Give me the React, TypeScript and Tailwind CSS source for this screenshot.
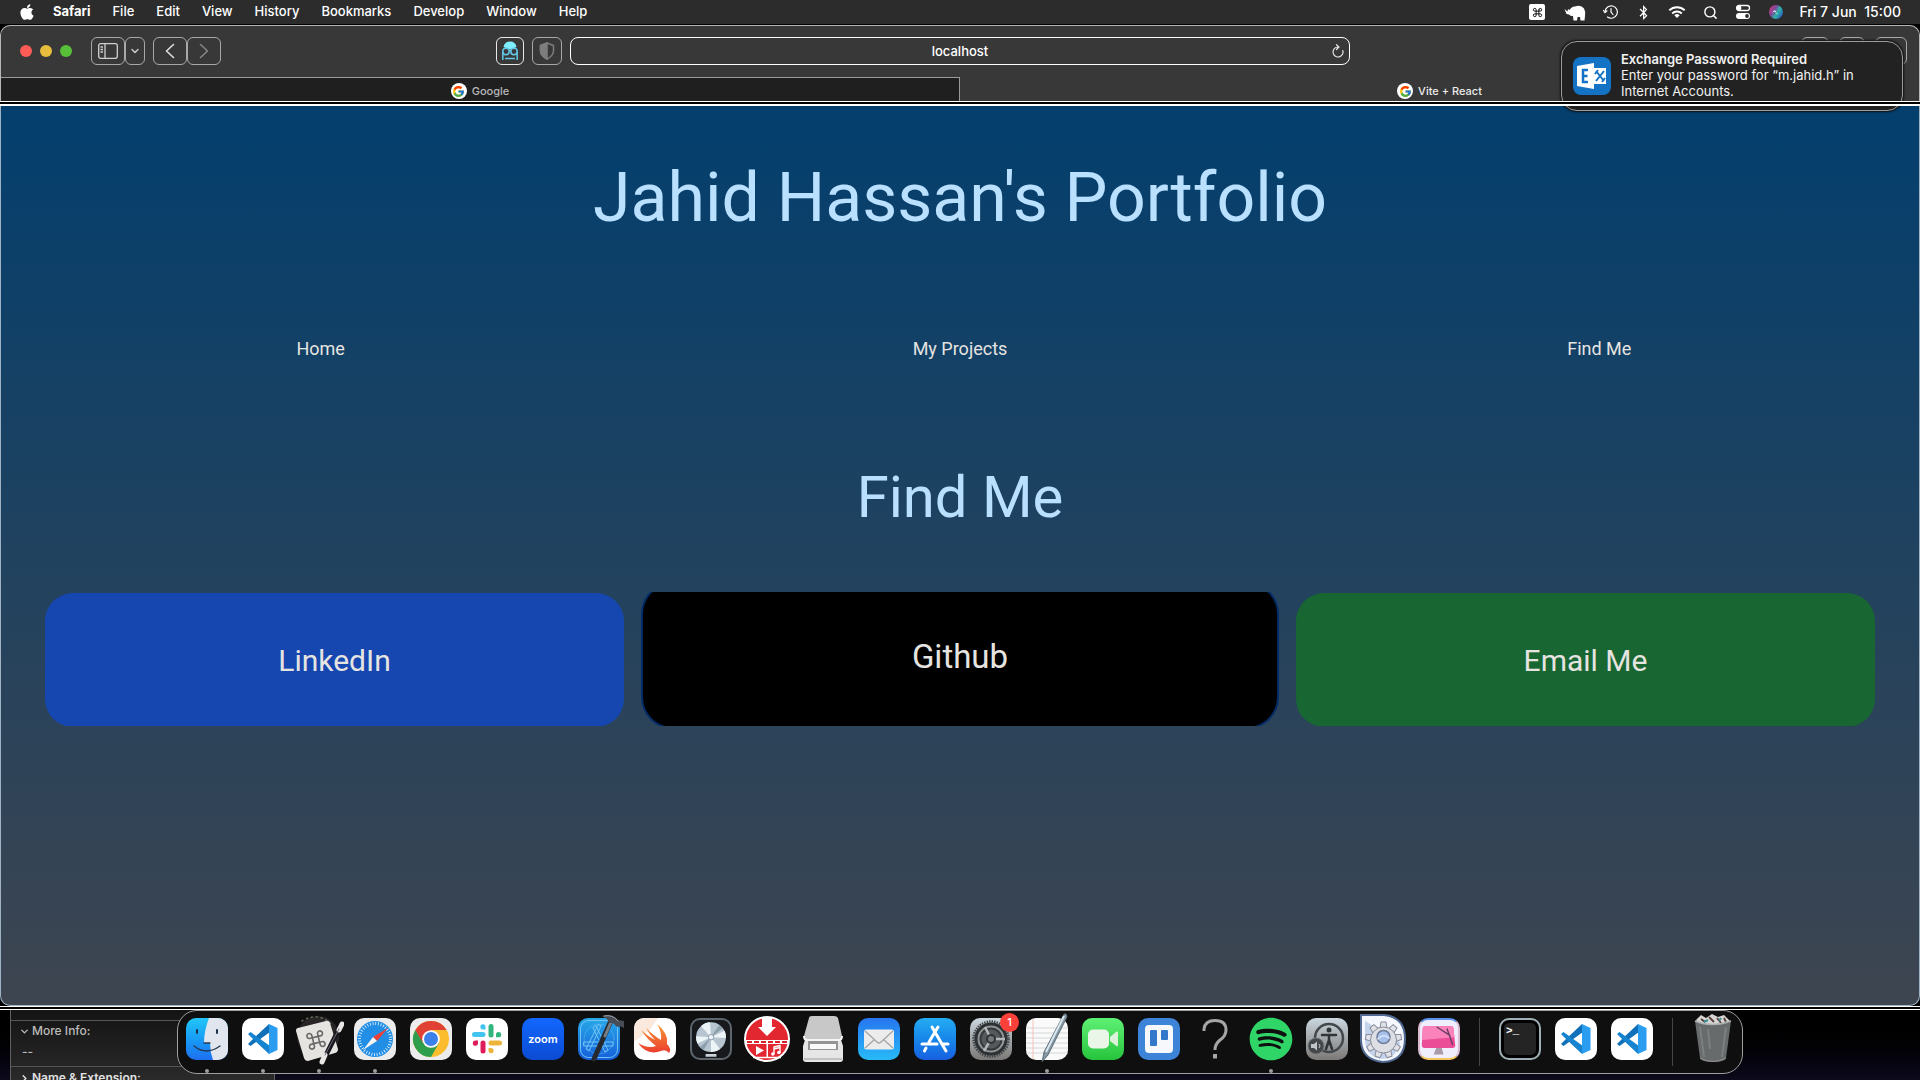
import type { ReactNode } from "react";
import { FaApple, FaBluetoothB, FaSpotify } from "react-icons/fa";
import { FcGoogle } from "react-icons/fc";
import { ChevronDown, ChevronRight, Command, Search } from "lucide-react";

const menus = ["File", "Edit", "View", "History", "Bookmarks", "Develop", "Window", "Help"];

const accent = { fill: "none", strokeLinecap: "round" as const, strokeLinejoin: "round" as const };

function Rhino() {
  return (
    <svg viewBox="0 0 22 20" className="h-5 w-[22px]" fill="#fff">
      <path d="M0.500 7 L3.500 9.500 L4 7 L5.500 8 Q8 4 11 4.500 Q17 2.500 20 6.500 Q22 10 21 14 L20.500 18.500 H16.500 L16 15 H13.500 L13 18.500 H9.500 L9 14 Q7 14.500 5 12.500 L2.500 12 Z" />
    </svg>
  );
}

function History() {
  return (
    <svg viewBox="0 0 16 16" className="size-4" fill="none" stroke="#fff" strokeWidth="1.2" strokeLinecap="round">
      <path d="M2 8 A6.200 6.200 0 1 1 4.500 13" />
      <path d="M8 4.500 V8 L10 10.500 M0.500 6.500 L2 8.600 L4 6.800" />
    </svg>
  );
}

function Wifi() {
  return (
    <svg viewBox="0 0 18 14" className="h-[14px] w-[18px]" fill="none" stroke="#fff" strokeWidth="2">
      <path d="M1.300 5.300 A11 11 0 0 1 16.700 5.300" />
      <path d="M4.200 8.400 A7 7 0 0 1 13.800 8.400" />
      <path d="M9 13 L6.300 10.300 A4 4 0 0 1 11.700 10.300 Z" fill="#fff" stroke="none" />
    </svg>
  );
}

function ControlCentre() {
  return (
    <svg viewBox="0 0 16 16" className="size-4" fill="none" stroke="#fff" strokeWidth="1.3">
      <rect x="1.500" y="1.500" width="13" height="5" rx="2.500" />
      <circle cx="4" cy="4" r="1.800" fill="#fff" />
      <rect x="1" y="9" width="14" height="6" rx="3" fill="#fff" stroke="none" />
      <circle cx="12" cy="12" r="1.900" fill="#2c2c2c" stroke="none" />
    </svg>
  );
}

function Siri() {
  return (
    <svg viewBox="0 0 16 16" className="size-4">
      <defs>
        <linearGradient id="siri" x1="0" y1="0.200" x2="1" y2="0.800">
          <stop offset="0" stopColor="#d8387e" />
          <stop offset="0.350" stopColor="#7a4a9c" />
          <stop offset="0.600" stopColor="#2fb4a4" />
          <stop offset="1" stopColor="#2652c8" />
        </linearGradient>
      </defs>
      <circle cx="8" cy="8" r="7" fill="url(#siri)" />
      <path d="M4 9 Q7 4 8 8 T12 7 Q9 12 8 9 T4 9" fill="#eff" />
    </svg>
  );
}

function MenuBar() {
  return (
    <header className="flex h-6 shrink-0 items-center justify-between bg-[#2c2c2c] pr-[19px] pl-[18px] text-[13px] font-medium text-white">
      <nav className="flex items-center gap-[22px]">
        <button aria-label="Apple menu" className="-mr-[5px]"><FaApple className="size-[18px]" /></button>
        <button className="font-bold">Safari</button>
        {menus.map((m) => <button key={m}>{m}</button>)}
      </nav>
      <div className="flex items-center">
        <div className="flex items-center gap-[17px] pr-[15px]">
          <span className="mr-[2px] flex size-4 items-center justify-center rounded-[2px] bg-white"><Command className="size-[11px] text-black" strokeWidth={2} /></span>
          <Rhino />
          <History />
          <FaBluetoothB className="size-[15px]" />
          <Wifi />
          <Search className="size-[15px]" strokeWidth={2.3} />
          <ControlCentre />
          <Siri />
        </div>
        <time className="pb-[2px] text-[14px] whitespace-pre">Fri 7 Jun  15:00</time>
      </div>
    </header>
  );
}

function ToolButton({ label, className, children }: { label: string; className: string; children?: ReactNode }) {
  return (
    <button aria-label={label} className={"flex h-7 items-center justify-center rounded-md border " + className}>
      {children}
    </button>
  );
}

function Toolbar() {
  return (
    <div className="grid h-[51px] grid-cols-[1fr_780px_1fr] items-center pb-[2px]">
      <div className="flex items-center">
        <div className="flex gap-2 pl-[19px]">
          <button aria-label="Close" className="size-3 rounded-full bg-[#ff5c57]" />
          <button aria-label="Minimise" className="size-3 rounded-full bg-[#e6bd3c]" />
          <button aria-label="Zoom" className="size-3 rounded-full bg-[#57c038]" />
        </div>
        <div className="flex pl-[19px]">
          <ToolButton label="Show sidebar" className="w-[34px] border-[#a8a8a8]">
            <svg viewBox="0 0 20 16" className="h-4 w-5" fill="none" stroke="#d0d0d0" strokeWidth="1.300">
              <rect x="0.700" y="0.700" width="18.600" height="14.600" rx="2" />
              <path d="M7 1 V15 M2.500 4 H5 M2.500 6.500 H5 M2.500 9 H5" />
            </svg>
          </ToolButton>
          <ToolButton label="Sidebar options" className="w-5 border-[#a8a8a8]"><ChevronDown className="size-3 text-[#c8c8c8]" strokeWidth={3} /></ToolButton>
          <ToolButton label="Back" className="ml-2 w-[34px] border-[#a8a8a8]">
            <svg viewBox="0 0 10 16" className="h-4 w-[10px]" {...accent} stroke="#e0e0e0" strokeWidth="1.600"><path d="M8.500 1.500 L1.500 8 L8.500 14.500" /></svg>
          </ToolButton>
          <ToolButton label="Forward" className="w-[34px] border-[#a8a8a8]">
            <svg viewBox="0 0 10 16" className="h-4 w-[10px]" {...accent} stroke="#858585" strokeWidth="1.600"><path d="M1.500 1.500 L8.500 8 L1.500 14.500" /></svg>
          </ToolButton>
        </div>
        <div className="ml-auto flex gap-2 pr-2">
          <ToolButton label="Extension" className="w-7 border-[#e8e8e8]">
            <svg viewBox="0 0 18 20" className="h-5 w-[18px]" fill="none" stroke="#62c8e8" strokeWidth="1.500">
              <path d="M2.500 6 Q3.500 0.500 9 0.500 Q14.500 0.500 15.500 6 L11 8 H7 Z" fill="#7eeeff" stroke="none" />
              <circle cx="5" cy="10.500" r="3.200" />
              <circle cx="13" cy="10.500" r="3.200" />
              <path d="M8 9.500 H10 M1.800 11 V19 M16.200 11 V19 M4 17.500 H14" />
            </svg>
          </ToolButton>
          <ToolButton label="Privacy report" className="w-[30px] border-[#a8a8a8]">
            <svg viewBox="0 0 16 18" className="h-[18px] w-4" fill="none" stroke="#7d7d7d" strokeWidth="1.500">
              <path d="M8 1 L14.500 3.500 V9 Q14 14 8 17 Q2 14 1.500 9 V3.500 Z" />
              <path d="M8 1 L1.500 3.500 V9 Q2 14 8 17 Z" fill="#7d7d7d" />
            </svg>
          </ToolButton>
        </div>
      </div>
      <div className="relative">
        <input aria-label="Address" defaultValue="localhost" className="block h-7 w-full rounded-lg border border-white bg-[#383838] text-center text-[13px] font-medium text-white" />
        <button aria-label="Reload" className="absolute top-[7px] right-[5px]">
          <svg viewBox="0 0 14 14" className="size-[14px]" fill="none" stroke="#e4e4e4" strokeWidth="1.200" strokeLinecap="round">
            <path d="M11.800 6.500 A5 5 0 1 1 7 3 M5.500 0.700 L8 3 L5.500 5.500" />
          </svg>
        </button>
      </div>
      <div className="flex justify-end gap-[10px] pr-3">
        <ToolButton label="Share" className="w-7 border-[#a8a8a8]" />
        <ToolButton label="New tab" className="w-[26px] border-[#a8a8a8]" />
        <ToolButton label="Tab overview" className="w-8 border-[#a8a8a8]" />
      </div>
    </div>
  );
}

function Favicon() {
  return <span className="flex size-4 items-center justify-center rounded-full bg-white"><FcGoogle className="size-[13px]" /></span>;
}

function Tabs() {
  return (
    <div className="grid h-6 grid-cols-2 text-[11px] font-medium">
      <button className="flex items-center justify-center gap-[5px] border-t border-r border-[#9a9a9a] bg-[#1f1f1f] pt-[3px] text-[#b8b8b8]"><Favicon />Google</button>
      <button className="flex items-center justify-center gap-[5px] pt-1 text-[#ececec]"><Favicon />Vite + React</button>
    </div>
  );
}

function Notification() {
  return (
    <aside className="absolute top-[41px] right-[17px] flex h-[70px] w-[342px] items-center gap-[10px] rounded-2xl border border-[#9c9c9c] bg-[#222222] pl-[11px] text-[13px] leading-4 text-[#f2f2f2] shadow-[0_0_2px_1px_#111111]">
      <svg viewBox="0 0 38 38" className="size-[38px] shrink-0">
        <rect width="38" height="38" rx="8" fill="#1473c4" />
        <rect x="19" y="11" width="14" height="16" fill="#fff" />
        <path d="M4 9 L21 6 V32 L4 29 Z" fill="#fff" />
        <path d="M15 13 H10 V25 H15 M10 19 H14.500" fill="none" stroke="#1473c4" strokeWidth="2.500" />
        <path d="M23 14 L31 24 M31 14 L23 24 M22 17 L25 13 M29 25 L32 21" stroke="#1473c4" strokeWidth="2" />
      </svg>
      <div className="pb-[2px]">
        <p className="font-semibold">Exchange Password Required</p>
        <p>Enter your password for “m.jahid.h” in<br />Internet Accounts.</p>
      </div>
    </aside>
  );
}

function Page() {
  return (
    <main className="flex-1 overflow-hidden bg-black">
      <div className="h-full rounded-b-[10px] border-x border-b border-[#9fb3c4] bg-linear-to-b/srgb from-[#033f6e] to-[#3e4550] font-[Roboto,sans-serif] text-[#e6e4e0]">
        <h1 className="pt-14 text-center text-[68px] leading-[72px] text-[#bae0ff]">Jahid Hassan's Portfolio</h1>
        <nav className="mt-[101px] grid grid-cols-3 justify-items-center text-[18px] leading-7">
          <a href="#home">Home</a>
          <a href="#projects">My Projects</a>
          <a href="#find-me">Find Me</a>
        </nav>
        <h2 className="mt-[104px] text-center text-[58px] leading-[60px] text-[#bae0ff]">Find Me</h2>
        <div className="mt-[65px] grid h-[134px] grid-cols-[579fr_638fr_579fr] gap-[17px] overflow-hidden px-[44px] text-[30px]">
          <a href="#linkedin" className="mt-px flex h-[134px] items-center justify-center rounded-[28px] bg-[#1646b0]">LinkedIn</a>
          <a href="#github" className="-mt-[10px] flex h-[147px] items-center justify-center rounded-[32px] border-2 border-[#042c68] bg-black pt-[2px] text-[33px]">Github</a>
          <a href="#email" className="mt-px flex h-[134px] items-center justify-center rounded-[28px] bg-[#186632]">Email Me</a>
        </div>
      </div>
    </main>
  );
}

function Tile({ className, children }: { className: string; children?: ReactNode }) {
  return <svg viewBox="0 0 42 42" className={"size-[42px] overflow-hidden rounded-[10px] " + className}>{children}</svg>;
}

function VsCode() {
  return (
    <Tile className="bg-white">
      <path d="M27 6 L10 22 L6 26 L8.500 28 L28 14 Z" fill="#0f6fb8" />
      <path d="M27 36 L10 20 L6 16 L8.500 14 L28 28 Z" fill="#1583cf" />
      <path d="M27 6 L35.500 10 V32 L27 36 Z" fill="#2a9df0" />
    </Tile>
  );
}

function Finder() {
  return (
    <Tile className="bg-linear-to-b from-[#24c6f8] to-[#1e6ff0]">
      <path d="M23 0 Q18 13 18 25 H24 Q24 34 27 42 H42 V0 Z" fill="#e1e6ee" />
      <path d="M11 12 V15 M31 12 V15" {...accent} stroke="#1d3047" strokeWidth="2" />
      <path d="M8 28 Q20 38 34 28 M18 25 H24" {...accent} stroke="#24384e" strokeWidth="1.300" />
    </Tile>
  );
}

function Shortcuts() {
  return (
    <svg viewBox="0 0 50 52" className="-mx-1 h-[52px] w-[50px]">
      <circle cx="24" cy="24" r="21" fill="#3a3436" opacity="0.600" />
      <path d="M8 8 Q24 -2 38 12" {...accent} stroke="#65705a" strokeWidth="1.500" strokeDasharray="1 4" />
      <path d="M4 15 L32 8 Q35 7 36 10 L44 36 Q44 39 41 40 L14 48 Q11 48 10 45 L2 18 Q2 15 4 15 Z" fill="#e6e4e1" />
      <g transform="rotate(-14 22 27) translate(14 19)" {...accent} stroke="#686766" strokeWidth="1.600">
        <path d="M5 5 V11 H11 V5 Z M5 5 H3 A2.500 2.500 0 1 1 5 3 Z M11 5 V3 A2.500 2.500 0 1 1 13 5 Z M5 11 V13 A2.500 2.500 0 1 1 3 11 Z M11 11 H13 A2.500 2.500 0 1 1 11 13 Z" />
      </g>
      <path d="M29 48 L47 12" {...accent} stroke="#17171d" strokeWidth="5" />
      <path d="M28 49 L31 42 M45 17 L48 11" {...accent} stroke="#e8e7e5" strokeWidth="5" />
      <path d="M31 42 L45 16" {...accent} stroke="#6d6c77" strokeWidth="1" />
    </svg>
  );
}

function SafariIcon() {
  return (
    <Tile className="bg-[#ececec]">
      <circle cx="21" cy="21" r="18" fill="#238ee6" />
      <circle cx="21" cy="21" r="15.500" fill="none" stroke="#e9f6ff" strokeWidth="3" strokeDasharray="0.800 1.900" />
      <path d="M34 10 L23 23 L19 19 Z" fill="#ef4037" />
      <path d="M9 32 L19 19 L23 23 Z" fill="#f4f4f4" />
    </Tile>
  );
}

function Chrome() {
  return (
    <Tile className="bg-[#ececec]">
      <circle cx="21" cy="21" r="18" fill="#fbbd2d" />
      <path d="M21 21 L5.400 12 A18 18 0 0 0 21 39 L29 25 Z" fill="#2f9e4c" />
      <path d="M21 12 H36.600 A18 18 0 0 0 5.400 12 L13 25 L21 21 Z" fill="#e14034" />
      <circle cx="21" cy="21" r="8.800" fill="#fff" />
      <circle cx="21" cy="21" r="7" fill="#3c80ea" />
    </Tile>
  );
}

function Slack() {
  return (
    <Tile className="bg-white">
      <g {...accent} strokeWidth="5">
        <path d="M8.500 16.500 H17" stroke="#41c5f0" />
        <path d="M25 8.500 V17" stroke="#31b57e" />
        <path d="M25 25 H33.500" stroke="#ecb33d" />
        <path d="M17 25 V33" stroke="#de1c5a" />
      </g>
      <path d="M19.500 11.500 H17 A2.600 2.600 0 1 1 19.500 8.900 Z" fill="#41c5f0" />
      <path d="M30 19.300 V16.800 A2.600 2.600 0 1 1 32.600 19.300 Z" fill="#31b57e" />
      <path d="M22.500 30 H25 A2.600 2.600 0 1 1 22.500 32.600 Z" fill="#ecb33d" />
      <path d="M12 22.500 V25 A2.600 2.600 0 1 1 9.400 22.500 Z" fill="#de1c5a" />
    </Tile>
  );
}

function ZoomApp() {
  return (
    <div className="flex size-[42px] items-center justify-center rounded-[10px] bg-linear-to-b from-[#1267ff] to-[#0b4bd2] text-[11px] font-semibold text-white">zoom</div>
  );
}

function Blueprint() {
  return (
    <svg viewBox="0 0 50 52" className="-mx-1 h-[52px] w-[50px]">
      <defs><linearGradient id="xc" x1="0" y1="0" x2="0" y2="1"><stop stopColor="#27a9e8" /><stop offset="1" stopColor="#155ed9" /></linearGradient></defs>
      <rect x="4" y="5" width="42" height="42" rx="10" fill="url(#xc)" />
      <g {...accent} stroke="#73c4f5" strokeWidth="1">
        <rect x="6.500" y="7.500" width="37" height="37" rx="8" />
        <circle cx="25" cy="26" r="15" opacity="0.400" />
        <path d="M10 29 H39 V33 H10 Z M22 13 L34 37 L31 39 L19 15 Z M27 13 L15 38 L12 36 L24 12 Z" />
      </g>
      <path d="M36 10 L20 46" {...accent} stroke="#26282f" strokeWidth="5" />
      <path d="M37 9 L31 23" {...accent} stroke="#777c85" strokeWidth="3" />
      <path d="M28 3 Q38 0 44 7 L50 8 V15 L46 13 L43 14 L39 10 L35 10 L33 6 Z" fill="#484d55" />
      <path d="M30 3 Q39 1 44 8" {...accent} stroke="#9ba2ab" strokeWidth="1" />
    </svg>
  );
}

function Logic() {
  return (
    <Tile className="border-2 border-[#5e6770] bg-[#17191c]">
      <circle cx="21" cy="19" r="16.500" fill="#b6c5cf" />
      <path d="M21 19 L10 6.500 A16.500 16.500 0 0 1 20 2.500 Z M21 19 L36 12 A16.500 16.500 0 0 1 37.500 20 Z M21 19 L31 32 A16.500 16.500 0 0 1 21 35.500 Z M21 19 L6 26 A16.500 16.500 0 0 1 4.500 18 Z" fill="#edf4f7" />
      <path d="M21 19 L30 5.500 L34 9 Z M21 19 L9 30 L13 33 Z" fill="#8b9eac" />
      <circle cx="21" cy="19" r="3" fill="#eef4f7" stroke="#8899a6" />
      <path d="M15 39 H27" stroke="#cbd3da" strokeWidth="3" />
    </Tile>
  );
}

function Downloader() {
  return (
    <svg viewBox="0 0 46 46" className="-mx-[2px] size-[46px]">
      <circle cx="23" cy="23" r="22" fill="#e32730" stroke="#fff" strokeWidth="2" />
      <path d="M18 1 H28 V11 H32 L23 20 L14 11 H18 Z M2 24 H44 V28 H2 Z M22.500 28 H24 V41 H22.500 Z M12 30 L20 34.500 L12 39 Z" fill="#fff" />
      <path d="M3 26 H43" stroke="#d82029" strokeWidth="2" strokeDasharray="5 2" />
      <path d="M9 41.500 H37" stroke="#fff" strokeWidth="1.500" />
      <path d="M30 38 V31 L36 29.500 V36.500 M30 33 L36 31.500" {...accent} stroke="#fff" strokeWidth="1.400" />
      <circle cx="28.800" cy="38" r="1.700" fill="#fff" /><circle cx="34.800" cy="36.500" r="1.700" fill="#fff" />
    </svg>
  );
}

function Drive() {
  return (
    <svg viewBox="0 0 42 50" className="h-[50px] w-[42px]">
      <path d="M4 23 H38 L41 32 V45 Q41 48 38 48 H4 Q1 48 1 45 V32 Z" fill="#e6e6e6" />
      <path d="M6 24 H36 V36 H6 Z" fill="#949494" /><path d="M8 30 H34 V35 H8 Z" fill="#fafafa" />
      <path d="M7 4 Q7 2 10 2 H32 Q35 2 36 4 L40 22 Q40 27 37 27 H5 Q1 27 2 22 Z" fill="#c8c8c8" />
      <path d="M2 22 Q2 26 5 26 H37 Q40 26 40 22" fill="none" stroke="#f5f5f5" strokeWidth="2" />
      <path d="M2 45 H40" stroke="#9c9c9c" />
    </svg>
  );
}

function Mail() {
  return (
    <Tile className="bg-linear-to-b from-[#2875ef] to-[#29baf7]">
      <rect x="6" y="11.500" width="30" height="20" rx="2.500" fill="#ececec" />
      <path d="M7 13 L19 24 Q21 26 23 24 L35 13 M7 30 L16 22 M35 30 L26 22" fill="none" stroke="#a3a5a8" strokeWidth="1.300" />
    </Tile>
  );
}

function AppStore() {
  return (
    <Tile className="bg-linear-to-b from-[#25acf2] to-[#185fe0]">
      <g {...accent} stroke="#fff" strokeWidth="3">
        <path d="M24 9 L15 24 M18 9 L32 33 M8 26 H23 M29 26 H34 M12 30 L10.500 33" />
      </g>
    </Tile>
  );
}

function Settings() {
  return (
    <div className="relative">
      <Tile className="bg-linear-to-b from-[#cbd8df] to-[#7c7977]">
        <circle cx="21" cy="21" r="17.500" fill="none" stroke="#42474a" strokeWidth="2.500" strokeDasharray="1.500 1" />
        <circle cx="21" cy="21" r="15" fill="#909596" stroke="#2e3133" strokeWidth="3" />
        <circle cx="21" cy="21" r="10.500" fill="#55595b" stroke="#36393b" strokeWidth="2" />
        <path d="M21 21 L15 9 M21 21 H35 M21 21 L14 33" stroke="#b1b6b7" strokeWidth="2.500" />
        <circle cx="21" cy="21" r="4" fill="#747879" stroke="#303335" strokeWidth="2" />
      </Tile>
      <span className="absolute -top-[5px] -right-[7px] flex size-[19px] items-center justify-center rounded-full bg-[#fa4038] text-[11px] font-medium text-white">1</span>
    </div>
  );
}

function TextEdit() {
  return (
    <svg viewBox="0 0 42 52" className="h-[52px] w-[42px]">
      <rect y="5" width="42" height="42" rx="10" fill="#fafafa" />
      <path d="M0 15 H42 M0 20 H42 M0 25 H42 M0 30 H42 M0 35 H42 M0 40 H42" stroke="#ccd1d1" strokeWidth="0.800" />
      <path d="M7 6 V46" stroke="#f4b6ae" strokeWidth="0.800" />
      <path d="M38 1 Q41 0 41 4 L22 42 L16 49 L18 39 Z" fill="#8397a4" stroke="#4b5c67" strokeWidth="0.800" />
      <path d="M38 3 L20 39" stroke="#dbe8ef" strokeWidth="2" />
    </svg>
  );
}

function FaceTime() {
  return (
    <Tile className="bg-linear-to-b from-[#5df174] to-[#25c43c]">
      <rect x="6" y="11.500" width="21" height="19" rx="5" fill="#e9f6e8" />
      <path d="M28 19 L34.500 13.500 Q36 13 36 15 V27 Q36 29 34.500 28 L28 23 Z" fill="#dcf2db" />
    </Tile>
  );
}

function Trello() {
  return (
    <Tile className="bg-[#3d83d8]">
      <rect x="7" y="7" width="28" height="28" rx="4" fill="#f6f8fb" />
      <rect x="12" y="12" width="7" height="16" rx="1" fill="#3478cb" /><rect x="23" y="12" width="7" height="10" rx="1" fill="#3478cb" />
    </Tile>
  );
}

function Unknown() {
  return (
    <svg viewBox="0 0 42 42" className="size-[42px]" fill="none" stroke="#a5a5a5" strokeWidth="3">
      <path d="M10 13 V11 Q11 2.500 21 2.500 Q32 2.500 32 12 Q32 18 26 22 Q21 26 21 32" /><path d="M21 36 V40.500" strokeWidth="4" />
    </svg>
  );
}

function Spotify() {
  return <FaSpotify className="-mx-px size-11 text-[#2fd566]" />;
}

function Accessibility() {
  return (
    <Tile className="bg-linear-to-b from-[#cbd8df] to-[#7c7977]">
      <circle cx="23" cy="20" r="14" fill="none" stroke="#42484b" strokeWidth="2.500" />
      <circle cx="23" cy="12" r="2.500" fill="#303538" />
      <path d="M16 17 H30 M23 17 V23 M23 22 L20 31 M23 22 L26 31" {...accent} stroke="#303538" strokeWidth="2.500" />
      <circle cx="10" cy="28" r="8" fill="#45484a" stroke="#74797b" />
      <path d="M5 26 H8 L11 23.500 V32.500 L8 30 H5 Z" fill="#c1c5c7" /><path d="M13 26 Q15 28 13 30" fill="none" stroke="#c1c5c7" />
    </Tile>
  );
}

const gearTeeth = [0, 40, 80, 120, 160, 200, 240, 280, 320];

function GearApp() {
  return (
    <svg viewBox="0 0 46 50" className="-mx-[2px] h-[50px] w-[46px]">
      <path d="M1 1 H24 Q45 3 45 25 Q45 47 23 48 Q2 46 1 27 Z" fill="#f4f8fe" stroke="#526a91" strokeWidth="2" />
      <path d="M5 7 L40 28 Q38 43 23 45 Q6 43 5 27 Z" fill="#c3d3ec" />
      <g stroke="#8a8d9c" strokeWidth="1">
        {gearTeeth.map((a) => <path key={a} d="M20 14 L21 8 H26 L27 14 Z" fill="#e2e3e8" transform={`rotate(${a} 23.500 26)`} />)}
      </g>
      <circle cx="23.500" cy="26" r="13" fill="#dddfe5" stroke="#8a8d9c" />
      <circle cx="23.500" cy="23" r="6.500" fill="#a6c0ea" stroke="#6d7c98" strokeWidth="1.500" />
      <path d="M18 25 Q23 19 29 24" {...accent} stroke="#d9e6fa" strokeWidth="1.500" />
    </svg>
  );
}

function Cleaner() {
  return (
    <Tile className="border-2 border-t-[#5b92e9] border-r-[#d9bcd0] border-b-[#f3c75e] border-l-[#d9bcd0] bg-[#f0edfc]">
      <path d="M5 7 H35 Q37 7 37 9 L39 28 Q39 31 36 31 H5 Q2 31 2 28 L3 9 Q3 7 5 7 Z" fill="#ec4d97" />
      <path d="M5 7 H35 Q37 7 37 9 L38 19 L2 22 L3 9 Q3 7 5 7 Z" fill="#fa83bc" />
      <path d="M18 31 H24 L26 38 H15 Z" fill="#a89aa9" /><path d="M19 8 L33 17 M30 10 L36 27" {...accent} stroke="#663b62" strokeWidth="1.500" />
    </Tile>
  );
}

function Terminal() {
  return (
    <div className="size-[42px] rounded-[10px] border-2 border-[#9eb0b5] bg-[#242424] py-1 pl-[5px] text-left font-['Liberation_Mono',monospace] text-[11px] leading-[14px] font-bold text-white ring-3 ring-black ring-inset">&gt;_</div>
  );
}

function Trash() {
  return (
    <svg viewBox="0 0 42 52" className="h-[52px] w-[42px]">
      <path d="M4 7 L9 2 L14 5 L20 1 L26 4 L32 2 L38 8 L33 14 H8 Z" fill="#d7d5d2" />
      <path d="M9 6 L13 9 M17 4 L22 9 M25 5 L29 10 M32 5 L34 9" stroke="#553d3a" strokeWidth="1.800" />
      <path d="M12 9 L16 7 M29 5 L27 8" stroke="#3e8a91" strokeWidth="2" />
      <path d="M3 8 Q20 15 39 8 L34 45 Q33 49 21 49 Q9 49 8 45 Z" fill="#686b6c" />
      <path d="M3 8 Q20 15 39 8" fill="none" stroke="#aeb1b2" strokeWidth="1.500" />
      <path d="M8 14 L12 44 M16 16 L18 36 M34 14 L30 44" stroke="#898d8e" strokeWidth="2" opacity="0.600" />
      <path d="M8 45 Q21 52 34 45" fill="none" stroke="#909495" />
    </svg>
  );
}

function SwiftBird() {
  return (
    <Tile className="bg-white">
      <defs><linearGradient id="sw" x1="0" y1="0" x2="0" y2="1"><stop stopColor="#f79b35" /><stop offset="1" stopColor="#ec3c2f" /></linearGradient></defs>
      <path d="M0 10 Q0 0 10 0 H24 L16 12 L0 24 Z" fill="#fbe9de" />
      <path d="M23 6 Q35 16 33 26 Q38 31 35 35 Q32 31 27 33 Q13 38 4 25 Q14 31 22 28 Q13 21 7 12 Q15 19 21 22 Q15 16 12 10 Q20 18 27 22 Q28 14 23 6 Z" fill="url(#sw)" />
    </Tile>
  );
}

const apps: { name: string; icon: ReactNode; open?: boolean }[] = [
  { name: "Finder", icon: <Finder />, open: true },
  { name: "Code", icon: <VsCode />, open: true },
  { name: "Shortcuts", icon: <Shortcuts />, open: true },
  { name: "Safari", icon: <SafariIcon />, open: true },
  { name: "Chrome", icon: <Chrome /> },
  { name: "Slack", icon: <Slack /> },
  { name: "Zoom", icon: <ZoomApp /> },
  { name: "Xcode", icon: <Blueprint /> },
  { name: "Swift Playgrounds", icon: <SwiftBird /> },
  { name: "Logic", icon: <Logic /> },
  { name: "Downloader", icon: <Downloader /> },
  { name: "Drive", icon: <Drive /> },
  { name: "Mail", icon: <Mail /> },
  { name: "App Store", icon: <AppStore /> },
  { name: "Settings", icon: <Settings /> },
  { name: "TextEdit", icon: <TextEdit />, open: true },
  { name: "FaceTime", icon: <FaceTime /> },
  { name: "Trello", icon: <Trello /> },
  { name: "Unknown app", icon: <Unknown /> },
  { name: "Spotify", icon: <Spotify />, open: true },
  { name: "Accessibility", icon: <Accessibility /> },
  { name: "Utility", icon: <GearApp /> },
  { name: "Cleaner", icon: <Cleaner /> },
];

function DockItem({ name, open, children }: { name: string; open?: boolean; children: ReactNode }) {
  return (
    <button aria-label={name} className="relative flex h-[62px] w-[42px] shrink-0 items-center justify-center pb-[6px]">
      <span className="flex w-[50px] shrink-0 items-center justify-center">{children}</span>
      {open && <span className="absolute bottom-0 left-[19px] size-[4px] rounded-full bg-[#9b9b9b]" />}
    </button>
  );
}

function Dock() {
  return (
    <div className="relative flex h-16 items-start gap-[14px] rounded-[20px] border border-[#a0a0a0] bg-[#0f0f0f] px-2">
      {apps.map((a) => <DockItem key={a.name} name={a.name} open={a.open}>{a.icon}</DockItem>)}
      <span className="mx-[5px] mt-[7px] h-12 w-px bg-[#454545]" />
      <DockItem name="Terminal"><Terminal /></DockItem>
      <DockItem name="Project window one"><VsCode /></DockItem>
      <DockItem name="Project window two"><VsCode /></DockItem>
      <span className="mx-[5px] mt-[7px] h-12 w-px bg-[#454545]" />
      <DockItem name="Bin"><Trash /></DockItem>
    </div>
  );
}

function InfoPanel() {
  return (
    <section className="absolute top-0 left-[10px] h-full w-[265px] overflow-hidden border-x border-[#606060] bg-linear-to-b from-[#141414] to-[#2a2a2a] text-[12px] leading-4 font-medium text-[#bcbcbc]">
      <div className="mt-[10px] h-[47px] border-y border-[#555555] pt-[2px]">
        <h3 className="flex items-center gap-[2px] pl-2"><ChevronDown className="size-[11px]" strokeWidth={3} />More Info:</h3>
        <p className="mt-[5px] pl-[11px]">--</p>
      </div>
      <h3 className="flex items-center gap-[2px] pt-[3px] pl-2 font-semibold text-[#e2e2e2]"><ChevronRight className="size-[11px]" strokeWidth={3} />Name &amp; Extension:</h3>
    </section>
  );
}

export default function App() {
  return (
    <div className="relative flex h-screen flex-col overflow-hidden bg-black font-[Inter,sans-serif]">
      <MenuBar />
      <div className="mt-px shrink-0 rounded-t-[10px] border-x border-t border-[#b5b8b6] bg-[#383838]">
        <Toolbar />
        <Tabs />
      </div>
      <Notification />
      <div className="relative h-[5px] shrink-0 border-t border-b-2 border-white bg-black" />
      <Page />
      <div className="h-1 shrink-0 border-y border-white bg-black" />
      <div className="relative flex h-[70px] shrink-0 justify-center bg-linear-to-b from-black to-[#0d0a1c]">
        <InfoPanel />
        <Dock />
      </div>
    </div>
  );
}
